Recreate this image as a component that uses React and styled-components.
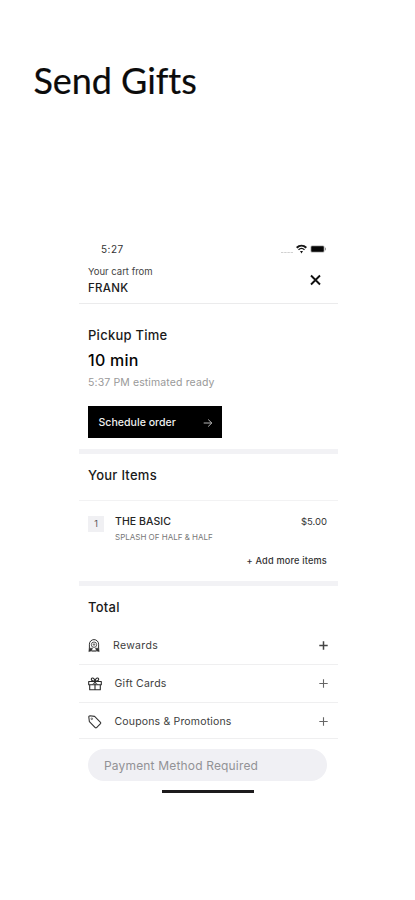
import React from "react";
import styled, { createGlobalStyle } from "styled-components";

const GlobalStyle = createGlobalStyle`
  * { box-sizing: border-box; }
  body { margin: 0; background: #fff; }
`;

const Page = styled.main`
  width: 415px;
  height: 900px;
  overflow: hidden;
  background: #fff;
  font-family: Inter, "Liberation Sans", sans-serif;
  color: #111;
`;
const Title = styled.h1`
  margin: 0;
  padding: 58px 0 0 33.5px;
  height: 240px;
  font: 400 36px/44px Lato, sans-serif;
  letter-spacing: -0.06px;
  color: #0b0b0b;
  -webkit-text-stroke: 0.2px #0b0b0b;
`;
const Phone = styled.section`
  width: 259px;
  margin-left: 79px;
  display: flex;
  flex-direction: column;
`;
const StatusBar = styled.div`
  height: 20px;
  padding: 0 11px 2px 22px;
  display: flex;
  align-items: center;
  justify-content: space-between;
`;
const Clock = styled.span`
  font-size: 10px;
  letter-spacing: 0.5px;
  color: #333;
`;
const StatusIcons = styled.div`
  display: flex;
  align-items: center;
`;
const CartHeader = styled.header`
  height: 44px;
  padding: 4px 17px 0 9px;
  display: flex;
  justify-content: space-between;
  border-bottom: 1px solid #ebebec;
`;
const CartLabel = styled.div`
  font-size: 9.5px;
  line-height: 15px;
  color: #444;
`;
const CartName = styled.div`
  font-size: 11.5px;
  line-height: 19px;
  font-weight: 500;
  letter-spacing: 0.3px;
  color: #1c1c1c;
`;
const CloseIcon = styled.svg`
  margin-top: 10px;
`;
const Pickup = styled.section`
  height: 145px;
  padding: 21px 9px 0;
`;
const Heading = styled.h2`
  margin: 0;
  font-size: 13px;
  line-height: 20px;
  font-weight: 500;
  letter-spacing: 0.26px;
  color: #1a1a1a;
`;
const Wait = styled.div`
  margin-top: 3px;
  font-size: 16px;
  line-height: 24px;
  font-weight: 500;
  letter-spacing: 0.25px;
  color: #050505;
`;
const Estimate = styled.div`
  margin-top: 3px;
  font-size: 10.5px;
  line-height: 16px;
  letter-spacing: 0.12px;
  color: #999;
`;
const ScheduleButton = styled.button`
  width: 134px;
  height: 32px;
  margin-top: 15px;
  padding: 1px 9px 0 10.5px;
  border: 0;
  display: flex;
  align-items: center;
  justify-content: space-between;
  background: #000;
  color: #eee;
  font: 500 10.6px/17px Inter, sans-serif;
`;
const Band = styled.div`
  height: 5px;
  background: #f2f2f5;
`;
const ItemsTitle = styled.div`
  height: 47px;
  padding: 11px 9px 0;
  border-bottom: 1px solid #f2f2f3;
`;
const Item = styled.div`
  height: 80px;
  padding: 12px 11px 0 9px;
  display: grid;
  grid-template-columns: 27px 1fr auto;
  grid-template-rows: 16px 16px 1fr;
`;
const Quantity = styled.span`
  width: 16px;
  height: 16px;
  margin-top: 3px;
  background: #f0f0f3;
  color: #555;
  font-size: 9px;
  line-height: 16px;
  text-align: center;
`;
const ItemName = styled.span`
  font-size: 10.5px;
  line-height: 17px;
  font-weight: 500;
  letter-spacing: 0.06px;
  color: #252525;
`;
const Price = styled.span`
  font-size: 9.5px;
  line-height: 17px;
  color: #333;
`;
const Modifier = styled.span`
  grid-column: 2 / 4;
  font-size: 8px;
  line-height: 16px;
  color: #777;
`;
const AddMore = styled.span`
  grid-column: 1 / 4;
  justify-self: end;
  margin-top: 8px;
  font-size: 9.2px;
  line-height: 16px;
  font-weight: 500;
  letter-spacing: 0.18px;
  color: #333;
`;
const TotalTitle = styled.div`
  height: 41px;
  padding: 11px 9px 0;
`;
const Option = styled.div`
  height: ${(p) => p.$height}px;
  padding: ${(p) => p.$top}px 10.5px 0 9px;
  display: flex;
  align-items: center;
  border-bottom: 1px solid #efeff0;
`;
const OptionLabel = styled.span`
  flex: 1;
  margin-left: ${(p) => p.$gap}px;
  font-size: 10.5px;
  letter-spacing: ${(p) => p.$spacing}px;
  color: #3d3d3d;
`;
const PaymentBar = styled.div`
  height: 32px;
  margin: 10px 11px 0 9px;
  padding-left: 16px;
  border-radius: 16px;
  background: #f0f0f4;
  color: #929296;
  font-size: 12px;
  line-height: 33px;
  letter-spacing: 0.17px;
`;
const HomeIndicator = styled.div`
  width: 92px;
  height: 3px;
  margin: 9px 0 0 83px;
  background: #1d1b1c;
`;

const Signal = () => (
  <svg width="12" height="10" viewBox="0 0 12 10">
    <path d="M0 8.5h12" stroke="#d0d0d0" strokeWidth="1" strokeDasharray="2.4 .8" />
  </svg>
);
const Wifi = () => (
  <svg width="17" height="10" viewBox="0.5 0 17 10" fill="none" stroke="#151515">
    <path d="M4.2 3.7c2.8-2.7 6.8-2.7 9.6 0" strokeWidth="2" />
    <path d="M6 5.8c1.8-1.7 4.2-1.7 6 0" strokeWidth="1.4" />
    <path d="M7.5 7h3L9 9.6z" fill="#151515" stroke="none" />
  </svg>
);
const Battery = () => (
  <svg width="17" height="8" viewBox="0 0 17 8">
    <rect x=".5" y=".5" width="14" height="7" rx="1.5" fill="#aaa" />
    <rect x="1.3" y="1.3" width="12.4" height="5.4" rx=".7" fill="#050505" />
    <path d="M15.5 2.7v2.6" stroke="#999" />
  </svg>
);
const Arrow = () => (
  <svg width="10" height="10" viewBox="0 0 10 10" fill="none" stroke="#ccc" strokeWidth=".9">
    <path d="M.7 5h8M5.2 1.5 8.8 5 5.2 8.5" />
  </svg>
);
const Plus = ({ bold }) => (
  <svg width="9" height="9" viewBox="0 0 9 9" stroke={bold ? "#444" : "#666"} strokeWidth={bold ? 1.5 : 1.1}>
    <path d="M4.5 .3v8.4M.3 4.5h8.4" />
  </svg>
);
const Rewards = () => (
  <svg width="12" height="14" viewBox="0 0 12 14" fill="none" stroke="#333" strokeWidth="1">
    <path d="M1.4 9.5V5.2a4.6 4.6 0 0 1 9.2 0v4.3" />
    <circle cx="6" cy="5.7" r="2.7" strokeWidth=".8" />
    <path d="M6 4v3.2M4.6 5.6h2.8" strokeWidth=".6" />
    <path d="M1.2 9.2 .8 12.6l2.6-.7L4.5 9.2zM10.8 9.2l.4 3.4-2.6-.7-1.1-2.7z" fill="#333" strokeWidth=".5" />
    <path d="M3.5 12h5" strokeWidth="1.2" />
  </svg>
);
const Gift = () => (
  <svg width="14" height="14" viewBox="0 0 14 14" fill="none" stroke="#2b2b2b" strokeWidth="1.1" strokeLinejoin="round">
    <path d="M.7 4.5h12.6v3.2H.7zM1.7 7.7h10.6v5H1.7zM7 4.5v8.2" />
    <path d="M7 4.3C5.2 4.3 3.3 3.6 3.3 2.3 3.3.2 6.5.5 7 4.3 7.5.5 10.7.2 10.7 2.3c0 1.3-1.9 2-3.7 2z" />
    <path d="M4.5 7.3 7 5l2.5 2.3" strokeWidth=".8" />
  </svg>
);
const Tag = () => (
  <svg width="14" height="14" viewBox="0 0 14 14" fill="none" stroke="#333" strokeWidth="1.1" strokeLinejoin="round">
    <path d="M.8 2Q.8.8 2 .8l4.6.6 5.9 5.9q.6.7 0 1.4l-3.9 3.9q-.7.6-1.4 0L1.4 6.7z" />
    <circle cx="3.8" cy="3.8" r=".8" strokeWidth=".7" />
  </svg>
);

const options = [
  { label: "Rewards", icon: <Rewards />, height: 38, top: 0, gap: 13, spacing: 0.32, bold: true },
  { label: "Gift Cards", icon: <Gift />, height: 38, top: 0, gap: 12.5, spacing: 0.25 },
  { label: "Coupons & Promotions", icon: <Tag />, height: 36, top: 2, gap: 12.5, spacing: 0.17 },
];

export default function App() {
  return (
    <Page>
      <GlobalStyle />
      <Title>Send Gifts</Title>
      <Phone>
        <StatusBar>
          <Clock>5:27</Clock>
          <StatusIcons>
            <Signal />
            <Wifi />
            <Battery />
          </StatusIcons>
        </StatusBar>
        <CartHeader>
          <div>
            <CartLabel>Your cart from</CartLabel>
            <CartName>FRANK</CartName>
          </div>
          <CloseIcon width="11" height="12" viewBox="0 0 11 12" stroke="#111" strokeWidth="1.9">
            <path d="M1 1.5 10 10.5M10 1.5 1 10.5" />
          </CloseIcon>
        </CartHeader>
        <Pickup>
          <Heading>Pickup Time</Heading>
          <Wait>10 min</Wait>
          <Estimate>5:37 PM estimated ready</Estimate>
          <ScheduleButton>
            Schedule order
            <Arrow />
          </ScheduleButton>
        </Pickup>
        <Band />
        <ItemsTitle>
          <Heading>Your Items</Heading>
        </ItemsTitle>
        <Item>
          <Quantity>1</Quantity>
          <ItemName>THE BASIC</ItemName>
          <Price>$5.00</Price>
          <Modifier>SPLASH OF HALF &amp; HALF</Modifier>
          <AddMore>+ Add more items</AddMore>
        </Item>
        <Band />
        <TotalTitle>
          <Heading>Total</Heading>
        </TotalTitle>
        {options.map((o) => (
          <Option key={o.label} $height={o.height} $top={o.top}>
            {o.icon}
            <OptionLabel $gap={o.gap} $spacing={o.spacing}>{o.label}</OptionLabel>
            <Plus bold={o.bold} />
          </Option>
        ))}
        <PaymentBar>Payment Method Required</PaymentBar>
        <HomeIndicator />
      </Phone>
    </Page>
  );
}
